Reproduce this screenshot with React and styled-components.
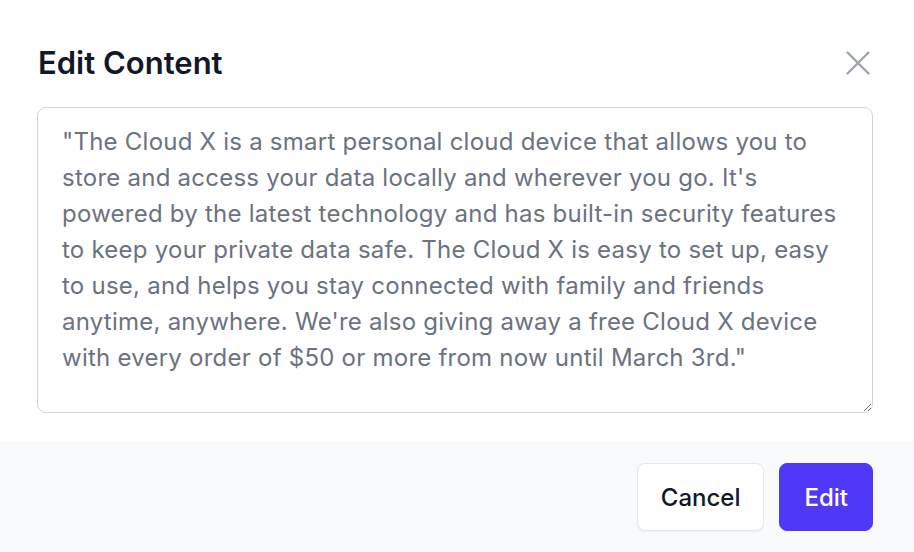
import React from "react";
import styled, { createGlobalStyle } from "styled-components";

const Global = createGlobalStyle`
  html, body { margin: 0; padding: 0; background: #ffffff; }
  body { font-family: Inter, "Noto Sans", sans-serif; -webkit-font-smoothing: antialiased; }
  * { box-sizing: border-box; }
`;

const Dialog = styled.div`
  width: 914px;
  height: 552px;
  background: #ffffff;
  display: flex;
  flex-direction: column;
`;

const Body = styled.div`
  padding: 44px 41px 28px 37px;
  display: flex;
  flex-direction: column;
  gap: 25px;
`;

const Header = styled.div`
  display: flex;
  align-items: center;
  justify-content: space-between;
`;

const Title = styled.h2`
  margin: 0;
  font-size: 31px;
  line-height: 38px;
  font-weight: 600;
  color: #111827;
  padding-left: 1px;
`;

const CloseButton = styled.button`
  border: 0;
  background: transparent;
  padding: 0;
  width: 32px;
  height: 32px;
  display: flex;
  align-items: center;
  justify-content: center;
  color: #9ca3af;
  margin-right: -1px;
  cursor: pointer;
`;

const TextArea = styled.textarea`
  width: 100%;
  height: 306px;
  resize: vertical;
  border: 1px solid #d1d5db;
  border-radius: 9px;
  padding: 16px 24px 14px;
  font-family: Inter, "Noto Sans", sans-serif;
  font-size: 24px;
  line-height: 36px;
  letter-spacing: 0.24px;
  color: #6b7280;
  background: #ffffff;
  outline: none;
  display: block;
`;

const Footer = styled.div`
  flex: 1;
  background: #f9fafb;
  display: flex;
  justify-content: flex-end;
  align-items: flex-start;
  gap: 15px;
  padding: 22px 41px 0 0;
`;

const Button = styled.button`
  height: 68px;
  padding: 0 ${(p) => (p.$primary ? "24px" : "23px")};
  border-radius: 8px;
  font-family: Inter, "Noto Sans", sans-serif;
  font-size: 24px;
  font-weight: 500;
  cursor: pointer;
  border: 1px solid ${(p) => (p.$primary ? "#4f39f6" : "#e5e7eb")};
  background: ${(p) => (p.$primary ? "#4f39f6" : "#ffffff")};
  color: ${(p) => (p.$primary ? "#ffffff" : "#111827")};
  box-shadow: ${(p) => (p.$primary ? "none" : "0 1px 2px rgba(0,0,0,0.05)")};
`;

const text =
  '"The Cloud X is a smart personal cloud device that allows you to store and access your data locally and wherever you go. It\'s powered by the latest technology and has built-in security features to keep your private data safe. The Cloud X is easy to set up, easy to use, and helps you stay connected with family and friends anytime, anywhere. We\'re also giving away a free Cloud X device with every order of $50 or more from now until March 3rd."';

export default function App() {
  return (
    <>
      <Global />
      <Dialog>
        <Body>
          <Header>
            <Title>Edit Content</Title>
            <CloseButton aria-label="Close">
              <svg width="28" height="28" viewBox="0 0 24 24" fill="none" stroke="currentColor" strokeWidth="2" strokeLinecap="round">
                <path d="M3 3L21 21M21 3L3 21" />
              </svg>
            </CloseButton>
          </Header>
          <TextArea defaultValue={text} spellCheck={false} />
        </Body>
        <Footer>
          <Button>Cancel</Button>
          <Button $primary>Edit</Button>
        </Footer>
      </Dialog>
    </>
  );
}
